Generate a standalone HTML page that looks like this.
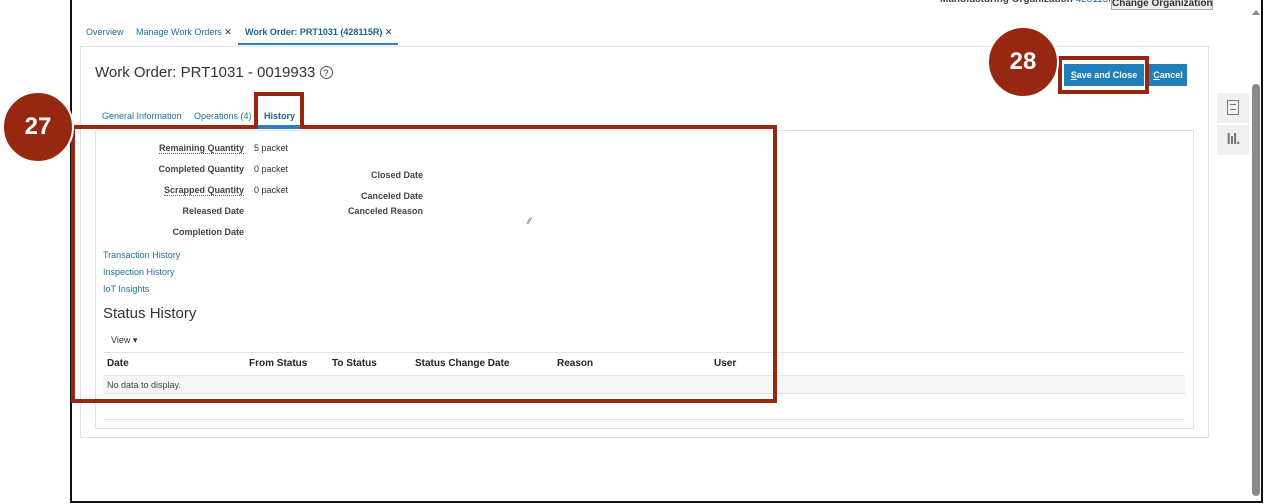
<!DOCTYPE html>
<html><head><style>
*{margin:0;padding:0;box-sizing:border-box}
body{width:1266px;height:504px;background:#fff;position:relative;overflow:hidden;font-family:"Liberation Sans",Arial,sans-serif;font-size:9px;color:#333}
.a{position:absolute;white-space:nowrap}
.lnk{color:#1f6e9c}
.lbl{font-weight:bold;color:#444;text-align:right;width:160px}
.ul{border-bottom:1px dotted #666}
.th{font-weight:bold;font-size:10px;color:#222}
</style></head><body>
<div class="a" style="left:70px;top:0;width:1193px;height:503px;border:2px solid #111;border-top:none"></div>
<div class="a" style="left:940px;top:-6px;font-size:10px;font-weight:bold;color:#444">Manufacturing Organization <span style="color:#1f6e9c;font-weight:normal">428115R</span></div>
<div class="a" style="left:1111px;top:-6px;width:102px;height:16px;border:1px solid #aaa;background:#eee;font-size:10px;font-weight:bold;text-align:center;line-height:18px;overflow:hidden">Change Organization</div>
<div class="a" style="left:1252px;top:10px;width:0;height:0;border-left:4px solid transparent;border-right:4px solid transparent;border-bottom:5px solid #888"></div>
<div class="a" style="left:1252px;top:84px;width:8px;height:412px;background:#8a8a8a;border-radius:4px"></div>
<div class="a lnk" style="left:86px;top:27px">Overview</div>
<div class="a lnk" style="left:136px;top:27px">Manage Work Orders <span style="color:#333">✕</span></div>
<div class="a" style="left:245px;top:27px;color:#1f5f8a;font-weight:bold">Work Order: PRT1031 (428115R) <span style="font-weight:normal;color:#333">✕</span></div>
<div class="a" style="left:238px;top:43px;width:160px;height:2px;background:#2a7fbf"></div>
<div class="a" style="left:80px;top:46px;width:1129px;height:392px;border:1px solid #e2e2e2"></div>
<div class="a" style="left:95px;top:64px;font-size:15px;color:#333">Work Order: PRT1031 - 0019933 <span style="display:inline-block;width:13px;height:13px;border:1px solid #555;border-radius:50%;font-size:9px;text-align:center;line-height:12px;vertical-align:1px">?</span></div>
<div class="a lnk" style="left:102px;top:111px">General Information</div>
<div class="a lnk" style="left:194px;top:111px">Operations (4)</div>
<div class="a" style="left:264px;top:111px;font-weight:bold;color:#1f5f8a">History</div>
<div class="a" style="left:95px;top:130px;width:1099px;height:299px;border:1px solid #e2e2e2"></div>
<div class="a" style="left:1064px;top:64px;width:80px;height:22px;background:#1f7fb8;color:#fff;font-weight:bold;text-align:center;line-height:22px"><u>S</u>ave and Close</div>
<div class="a" style="left:1149px;top:64px;width:38px;height:22px;background:#1f7fb8;color:#fff;font-weight:bold;text-align:center;line-height:22px"><u>C</u>ancel</div>
<div class="a" style="left:1217px;top:93px;width:32px;height:30px;background:#f0f0f0"></div>
<div class="a" style="left:1227px;top:100px;width:12px;height:15px;border:1.5px solid #777"></div>
<div class="a" style="left:1230px;top:104px;width:6px;height:6px;border-top:1px solid #777;border-bottom:1px solid #777"></div>
<div class="a" style="left:1217px;top:125px;width:32px;height:30px;background:#f0f0f0;color:#777;font-weight:bold;font-size:15px;text-align:center;line-height:30px;letter-spacing:-1px">lıl.</div>
<div class="a lbl" style="left:84px;top:143px"><span class="ul">Remaining Quantity</span></div>
<div class="a lbl" style="left:84px;top:164px">Completed Quantity</div>
<div class="a lbl" style="left:84px;top:185px"><span class="ul">Scrapped Quantity</span></div>
<div class="a lbl" style="left:84px;top:206px">Released Date</div>
<div class="a lbl" style="left:84px;top:227px">Completion Date</div>
<div class="a" style="left:254px;top:143px">5 packet</div>
<div class="a" style="left:254px;top:164px">0 packet</div>
<div class="a" style="left:254px;top:185px">0 packet</div>
<div class="a lbl" style="left:263px;top:170px">Closed Date</div>
<div class="a lbl" style="left:263px;top:191px">Canceled Date</div>
<div class="a lbl" style="left:263px;top:206px">Canceled Reason</div>
<div class="a" style="left:528px;top:216px;font-size:9px;color:#555">⁄⁄</div>
<div class="a lnk" style="left:103px;top:250px">Transaction History</div>
<div class="a lnk" style="left:103px;top:267px">Inspection History</div>
<div class="a lnk" style="left:103px;top:284px">IoT Insights</div>
<div class="a" style="left:103px;top:305px;font-size:15px;color:#333">Status History</div>
<div class="a" style="left:111px;top:335px">View ▾</div>
<div class="a" style="left:103px;top:352px;width:1082px;height:1px;background:#e4e4e4"></div>
<div class="a th" style="left:107px;top:358px">Date</div>
<div class="a th" style="left:249px;top:358px">From Status</div>
<div class="a th" style="left:332px;top:358px">To Status</div>
<div class="a th" style="left:415px;top:358px">Status Change Date</div>
<div class="a th" style="left:557px;top:358px">Reason</div>
<div class="a th" style="left:714px;top:358px">User</div>
<div class="a" style="left:103px;top:375px;width:1082px;height:19px;background:#f6f6f6;border-top:1px solid #e4e4e4;border-bottom:1px solid #e4e4e4"></div>
<div class="a" style="left:107px;top:380px;color:#444">No data to display.</div>
<div class="a" style="left:103px;top:419px;width:1082px;height:1px;background:#e4e4e4"></div>
<div class="a" style="left:71px;top:125px;width:706px;height:278px;border:4px solid #962812"></div>
<div class="a" style="left:254px;top:92px;width:50px;height:37px;border:4px solid #962812;border-bottom:none"></div>
<div class="a" style="left:258px;top:125px;width:42px;height:4px;background:#2a7fbf"></div>
<div class="a" style="left:2px;top:91px;width:72px;height:72px;border-radius:50%;background:#962812;border:2px solid #fff;color:#fff;font-weight:bold;font-size:24px;text-align:center;line-height:68px">27</div>
<div class="a" style="left:1058px;top:56px;width:91px;height:38px;border:4px solid #962812"></div>
<div class="a" style="left:987px;top:26px;width:72px;height:72px;border-radius:50%;background:#962812;border:2px solid #fff;color:#fff;font-weight:bold;font-size:24px;text-align:center;line-height:68px">28</div>
</body></html>
